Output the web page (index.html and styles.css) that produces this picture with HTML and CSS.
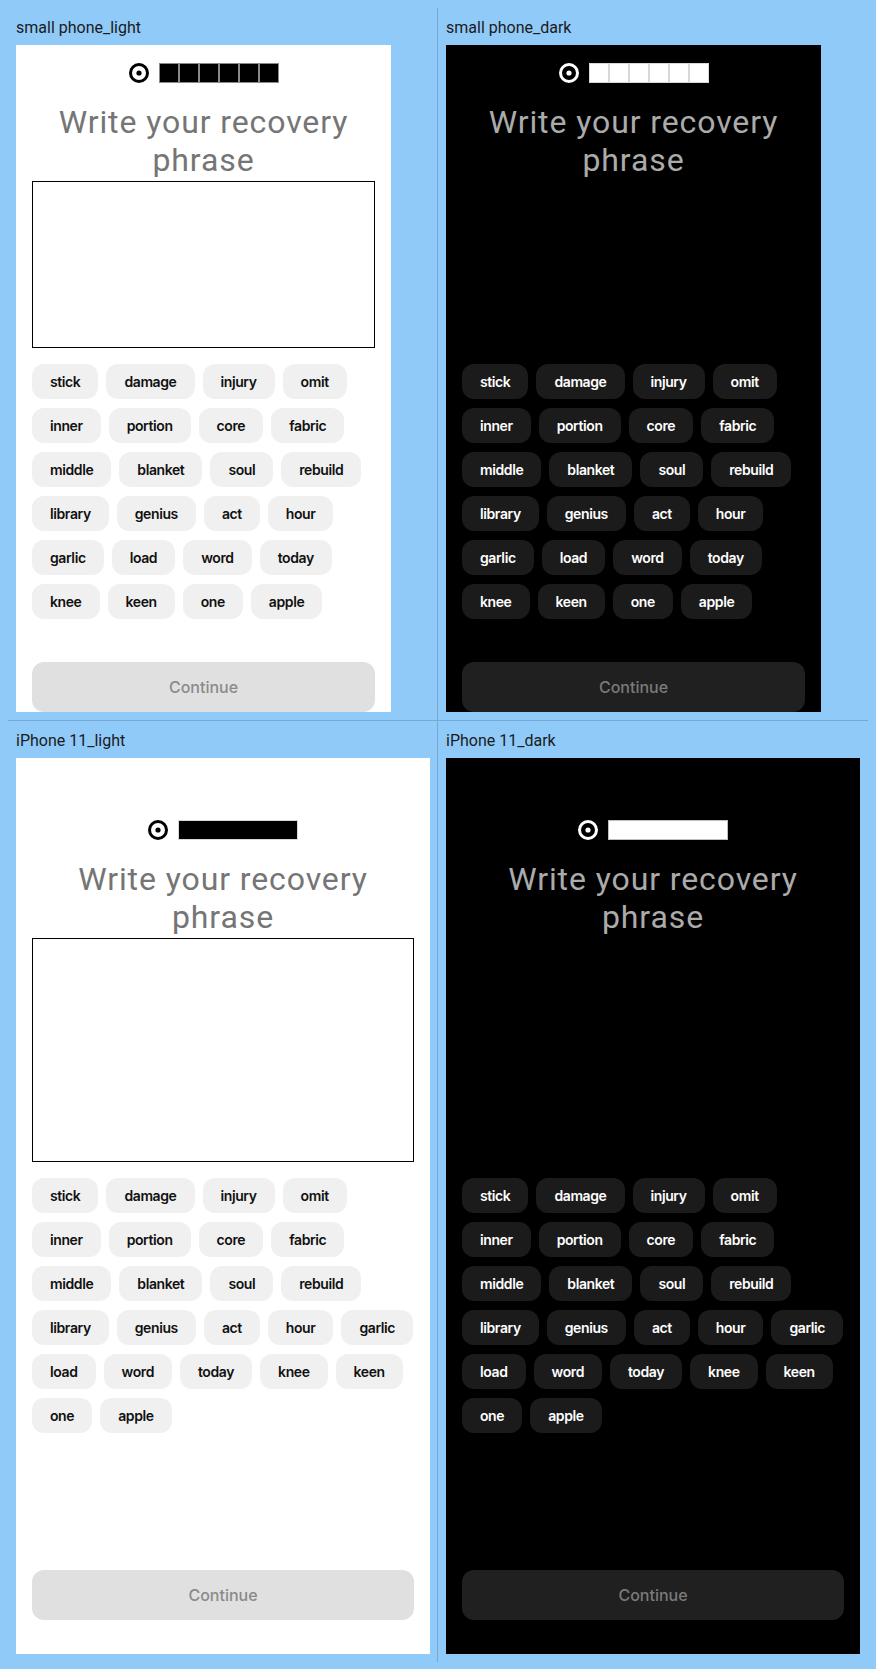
FILE: index.html
```html
<!DOCTYPE html>
<html lang="en">
<head>
<meta charset="utf-8">
<title>Write your recovery phrase</title>
<link rel="stylesheet" href="styles.css">
</head>
<body>
<div class="board">
  <section class="cell cell-left cell-top">
    <div class="label">small phone_light</div>
    <div class="phone small light">
      <div class="header">
        <svg class="target" viewBox="0 0 20 20" width="20" height="20"><circle cx="10" cy="10" r="8.5" fill="none" stroke="currentColor" stroke-width="3"/><circle cx="10" cy="10" r="2.6" fill="currentColor"/></svg>
        <div class="slots segmented"><i></i><i></i><i></i><i></i><i></i><i></i></div>
      </div>
      <h1 class="title">Write your recovery phrase</h1>
      <div class="phrase-box"></div>
      <div class="chips">
        <span class="chip">stick</span><span class="chip">damage</span><span class="chip">injury</span><span class="chip">omit</span><span class="chip">inner</span><span class="chip">portion</span><span class="chip">core</span><span class="chip">fabric</span><span class="chip">middle</span><span class="chip">blanket</span><span class="chip">soul</span><span class="chip">rebuild</span><span class="chip">library</span><span class="chip">genius</span><span class="chip">act</span><span class="chip">hour</span><span class="chip">garlic</span><span class="chip">load</span><span class="chip">word</span><span class="chip">today</span><span class="chip">knee</span><span class="chip">keen</span><span class="chip">one</span><span class="chip">apple</span>
      </div>
      <button class="continue" type="button">Continue</button>
    </div>
  </section>
  <section class="cell cell-top">
    <div class="label">small phone_dark</div>
    <div class="phone small dark">
      <div class="header">
        <svg class="target" viewBox="0 0 20 20" width="20" height="20"><circle cx="10" cy="10" r="8.5" fill="none" stroke="currentColor" stroke-width="3"/><circle cx="10" cy="10" r="2.6" fill="currentColor"/></svg>
        <div class="slots segmented"><i></i><i></i><i></i><i></i><i></i><i></i></div>
      </div>
      <h1 class="title">Write your recovery phrase</h1>
      <div class="phrase-box"></div>
      <div class="chips">
        <span class="chip">stick</span><span class="chip">damage</span><span class="chip">injury</span><span class="chip">omit</span><span class="chip">inner</span><span class="chip">portion</span><span class="chip">core</span><span class="chip">fabric</span><span class="chip">middle</span><span class="chip">blanket</span><span class="chip">soul</span><span class="chip">rebuild</span><span class="chip">library</span><span class="chip">genius</span><span class="chip">act</span><span class="chip">hour</span><span class="chip">garlic</span><span class="chip">load</span><span class="chip">word</span><span class="chip">today</span><span class="chip">knee</span><span class="chip">keen</span><span class="chip">one</span><span class="chip">apple</span>
      </div>
      <button class="continue" type="button">Continue</button>
    </div>
  </section>
  <section class="cell cell-left">
    <div class="label">iPhone 11_light</div>
    <div class="phone large light">
      <div class="header">
        <svg class="target" viewBox="0 0 20 20" width="20" height="20"><circle cx="10" cy="10" r="8.5" fill="none" stroke="currentColor" stroke-width="3"/><circle cx="10" cy="10" r="2.6" fill="currentColor"/></svg>
        <div class="slots solid"><i></i><i></i><i></i><i></i><i></i><i></i></div>
      </div>
      <h1 class="title">Write your recovery phrase</h1>
      <div class="phrase-box"></div>
      <div class="chips">
        <span class="chip">stick</span><span class="chip">damage</span><span class="chip">injury</span><span class="chip">omit</span><span class="chip">inner</span><span class="chip">portion</span><span class="chip">core</span><span class="chip">fabric</span><span class="chip">middle</span><span class="chip">blanket</span><span class="chip">soul</span><span class="chip">rebuild</span><span class="chip">library</span><span class="chip">genius</span><span class="chip">act</span><span class="chip">hour</span><span class="chip">garlic</span><span class="chip">load</span><span class="chip">word</span><span class="chip">today</span><span class="chip">knee</span><span class="chip">keen</span><span class="chip">one</span><span class="chip">apple</span>
      </div>
      <button class="continue" type="button">Continue</button>
    </div>
  </section>
  <section class="cell">
    <div class="label">iPhone 11_dark</div>
    <div class="phone large dark">
      <div class="header">
        <svg class="target" viewBox="0 0 20 20" width="20" height="20"><circle cx="10" cy="10" r="8.5" fill="none" stroke="currentColor" stroke-width="3"/><circle cx="10" cy="10" r="2.6" fill="currentColor"/></svg>
        <div class="slots solid"><i></i><i></i><i></i><i></i><i></i><i></i></div>
      </div>
      <h1 class="title">Write your recovery phrase</h1>
      <div class="phrase-box"></div>
      <div class="chips">
        <span class="chip">stick</span><span class="chip">damage</span><span class="chip">injury</span><span class="chip">omit</span><span class="chip">inner</span><span class="chip">portion</span><span class="chip">core</span><span class="chip">fabric</span><span class="chip">middle</span><span class="chip">blanket</span><span class="chip">soul</span><span class="chip">rebuild</span><span class="chip">library</span><span class="chip">genius</span><span class="chip">act</span><span class="chip">hour</span><span class="chip">garlic</span><span class="chip">load</span><span class="chip">word</span><span class="chip">today</span><span class="chip">knee</span><span class="chip">keen</span><span class="chip">one</span><span class="chip">apple</span>
      </div>
      <button class="continue" type="button">Continue</button>
    </div>
  </section>
</div>
</body>
</html>
```

FILE: styles.css
```css
* { box-sizing: border-box; }

html, body { background: #90caf9; }

body {
  margin: 8px;
  font-family: Roboto, "Noto Sans", sans-serif;
}

.board {
  display: grid;
  grid-template-columns: 430px 430px;
}

.cell {
  padding: 8px 0 8px 8px;
}

.cell-left { border-right: 1px solid #76a8d6; }
.cell-top { border-bottom: 1px solid #76a8d6; }

.label {
  font-size: 16px;
  line-height: 24px;
  color: #1b1b1b;
  margin-bottom: 5px;
}

.phone {
  display: flex;
  flex-direction: column;
  overflow: hidden;
  padding-left: 16px;
  padding-right: 16px;
  height: var(--screen-h);
}

.phone.small { width: 375px; --screen-h: 667px; }
.phone.large { width: 414px; --screen-h: 896px; padding-top: 44px; padding-bottom: 34px; }

.phone.light { background: #ffffff; color: #000; }
.phone.dark { background: #000000; color: #fff; }

.header {
  flex: 0 0 56px;
  display: flex;
  align-items: center;
  justify-content: center;
  gap: 10px;
}

.target { display: block; }

.slots {
  display: flex;
  width: 120px;
  height: 20px;
}

.slots i {
  display: block;
  width: 20px;
  height: 20px;
}

.light .slots.segmented i { background: #000; border: 1px solid #8a8a8a; }
.dark .slots.segmented i { background: #fff; border: 1px solid #d8d8d8; }

.light .slots.solid { background: #000; border: 1px solid #d9d9d9; }
.dark .slots.solid { background: #fff; border: 1px solid #bdbdbd; }
.slots.solid i { width: 0; flex: 1; }

.title {
  margin: 2px 0 2px;
  flex: 0 0 auto;
  font-family: Roboto, sans-serif;
  font-weight: 400;
  font-size: 32px;
  line-height: 38px;
  letter-spacing: 0.9px;
  text-align: center;
}

.light .title { color: #757575; }
.dark .title { color: #ababab; }

.phrase-box {
  flex: 0 0 calc(var(--screen-h) * 0.25);
  border: 1px solid #000;
}

.chips {
  margin-top: 16px;
  flex: 0 0 auto;
  display: flex;
  flex-wrap: wrap;
  column-gap: 8px;
  row-gap: 9px;
}

.chip {
  display: block;
  font-family: Inter, sans-serif;
  font-weight: 600;
  font-size: 14px;
  line-height: 17px;
  letter-spacing: -0.4px;
  padding: 9px 18px;
  border-radius: 12px;
}

.light .chip { background: #f0f0f0; color: #111; }
.dark .chip { background: #1b1b1b; color: #fff; }

.continue {
  margin-top: auto;
  flex: 0 0 50px;
  width: 100%;
  border: 0;
  border-radius: 12px;
  font-family: Inter, sans-serif;
  font-weight: 500;
  font-size: 16px;
}

.light .continue { background: #e0e0e0; color: #8a8a8a; }
.dark .continue { background: #202020; color: #7a7a7a; }
```
